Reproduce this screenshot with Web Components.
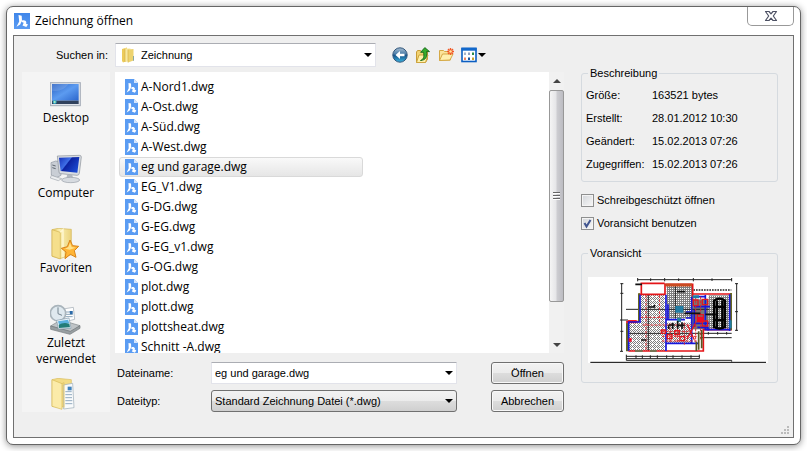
<!DOCTYPE html>
<html lang="de">
<head>
<meta charset="utf-8">
<title>Zeichnung öffnen</title>
<style>
    body {
        margin: 0;
        padding: 6px;
        background: #fff;
        color: #000;
        font-family: "Liberation Sans", Arial, sans-serif;
        font-size: 11px;
    }
</style>
</head>
<body>
<open-dialog></open-dialog>

<script>
const icons = {
    logo: `<svg viewBox="0 0 16 16" width="16" height="16"><defs><linearGradient id="g" x2="0" y2="1"><stop stop-color="#3f86ea"/><stop offset="1" stop-color="#5b9bf2"/></linearGradient></defs><rect width="16" height="16" fill="url(#g)"/><path d="M4.500 2l3.200.8.300 4.700-1.800 4-3.700 2.300 2.700-5.300zM8 7.600c2.200-.8 4 .1 4.400 1.700l-.5 1.200 2.100 1-1.700 2.500-3.800-1.500 1.200-2.700-2-.8z" fill="#fff"/></svg>`,
    dwg: `<svg viewBox="0 0 13 16" width="13" height="16"><path d="M0 0h9l4 4v12H0z" fill="#5a9cf3"/><path d="M9 0v4h4z" fill="#d5e6fc"/><path d="M3.500 4l2.500.6.200 3.400-1.500 3.500-3 2 2-4.200zM6.500 8.200c1.700-.7 3.200.1 3.500 1.400l-.4 1 1.700.9-1.400 2.200-3-1.200.9-2.200-1.600-.6z" fill="#fff"/></svg>`,
    folder: `<svg viewBox="0 0 14 16" width="14" height="16"><path d="M1 2l5-1.500V14l-4 1.500L1 14z" fill="#eccb5c"/><path d="M4 1.500h5.500V14L4 15z" fill="#f8e9a0"/><path d="M7 2.500L12.500 2v11.500L7 15.500z" fill="#edd36f"/><path d="M12 9h1v4.500l-1 .5z" fill="#8aa8a0"/><path d="M4 2v13M7 2.500v13" stroke="#d3ad41" stroke-width=".6"/></svg>`,
    back: `<svg viewBox="0 0 16 16" width="16" height="16"><defs><linearGradient id="b" x2="0" y2="1"><stop stop-color="#a9bfd2"/><stop offset=".45" stop-color="#4478a5"/><stop offset=".5" stop-color="#154f86"/><stop offset="1" stop-color="#39b5e2"/></linearGradient></defs><circle cx="8" cy="8" r="7.200" fill="url(#b)" stroke="#31567b"/><path d="M3.500 8L8 4v2.700h4.500v2.600H8V12z" fill="#fff"/></svg>`,
    up: `<svg viewBox="0 0 16 16" width="16" height="16"><path d="M1.500 5l1-1.500h3L6.500 4.500h6V12l-2 3.500h-9z" fill="#f2d272" stroke="#c79b35"/><path d="M1.500 15.500L4 8h9l-2.500 7.500z" fill="#fff0a8" stroke="#cda440"/><path d="M5.500 13.500C9 12 9.300 9.500 8.500 5.300H5.600L9.800.6l4.700 4H11.500c1 5-.5 8.500-6 8.900z" fill="#35ad2b" stroke="#15651a" stroke-width=".9"/></svg>`,
    create: `<svg viewBox="0 0 16 16" width="16" height="16"><path d="M1.500 13.500V3.500h4l1 1h6V13z" fill="#fbe49a" stroke="#d5a946"/><path d="M1.500 13.500L4.500 7h10.500l-3 6z" fill="#fff0ae" stroke="#d5a946"/><g stroke="#f25a27" stroke-width="1.400"><path d="M12.500 1v7M9 4.500h7M10 2l5 5M15 2l-5 5"/></g><circle cx="12.500" cy="4.500" r="1.300" fill="#ffe7a1"/></svg>`,
    view: `<svg viewBox="0 0 16 16" width="16" height="16"><rect x="1" y="1.500" width="14" height="13" fill="#fff" stroke="#0b5ec2" stroke-width="1.600"/><path d="M.5.700h15v3H.5z" fill="#1268cb"/><path d="M3 5.500h2v2.500H3z" fill="#a6b4ca"/><path d="M7 5.500h2v2.500H7z" fill="#8da0c2"/><path d="M11 5.500h2v2.500h-2z" fill="#2a8a4b"/><path d="M3 10.500h2V13H3z" fill="#ec8466"/><path d="M7 10.500h2V13H7z" fill="#18549d"/><path d="M11 10.500h2V13h-2z" fill="#c8a12c"/></svg>`,
    close: `<svg viewBox="0 0 14 12" width="14" height="12"><path d="M1.500 1.500H5l2 2.300 2-2.300h3.500L9.300 6l3.200 4.500H9L7 8.200l-2 2.300H1.500L4.700 6z" fill="#fff" stroke="#4c5063" stroke-width="1.200" stroke-linejoin="round"/></svg>`,

    desktop: `<svg viewBox="148 234 96 96" width="32" height="32"><defs><linearGradient id="d" x2="1" y2="1"><stop stop-color="#2b62c4"/><stop offset=".5" stop-color="#5c9bf0"/><stop offset="1" stop-color="#2a65cc"/></linearGradient></defs><rect x="149" y="248" width="90" height="69" fill="#dfe3ea" stroke="#a6adb8" stroke-width="3"/><rect x="154" y="252" width="80" height="50" fill="url(#d)"/><path d="M154 302V272q30 6 50-20h-50z" fill="#fff" opacity=".13"/><rect x="154" y="302" width="80" height="10" fill="#30415c"/><circle cx="162" cy="306" r="6" fill="#33b0c9"/><path d="M159 306h6M162 303v6" stroke="#e8f7b0" stroke-width="2"/></svg>`,
    computer: `<svg viewBox="148 9 96 96" width="32" height="32"><defs><linearGradient id="c" x2="1" y2=".6"><stop stop-color="#1430b8"/><stop offset=".45" stop-color="#3f6fe6"/><stop offset=".5" stop-color="#0c22a0"/><stop offset="1" stop-color="#1a48cf"/></linearGradient></defs><path d="M151 38l14-5 16 3v40l-13 7-16-8z" fill="#c9ced5" stroke="#8d949e" stroke-width="2"/><path d="M155 45l10 3M155 53l10 3" stroke="#5e6670" stroke-width="3"/><path d="M170 18l66-2q6 0 6 5l-6 49q-1 6-7 6l-49-5q-5 0-5-5z" fill="#d8dce1" stroke="#8a9099" stroke-width="2"/><path d="M175 23l61-2-6 47-50-5z" fill="url(#c)"/><path d="M199 75h16l3 12h-21z" fill="#b2b8c0"/><ellipse cx="210" cy="90" rx="27" ry="8" fill="#d7dbe0" stroke="#989ea7" stroke-width="2"/><path d="M152 76l31 10-10 6-24-8z" fill="#eceef0" stroke="#a0a6ae" stroke-width="2"/></svg>`,
    favorites: `<svg viewBox="148 234 96 96" width="32" height="32"><defs><linearGradient id="f" x2="1" y2="0"><stop stop-color="#e6c75d"/><stop offset=".4" stop-color="#fbf0b5"/><stop offset="1" stop-color="#ead27b"/></linearGradient></defs><path d="M154 239l18-4 40 3v76l-34 12-24-7z" fill="url(#f)" stroke="#d3b759" stroke-width="2"/><path d="M154 239l25 8v80l-25-9z" fill="#f5df8c" stroke="#d3b452" stroke-width="2"/><path d="M179 247l8-8v83" fill="none" stroke="#fff8d5" stroke-width="4"/><path d="M208 270l8 17 18 2-13 13 5 20-17-9-16 13 3-20-14-11 18-5z" fill="#ffb536" stroke="#d88319" stroke-width="3" stroke-linejoin="round"/><path d="M208 278l5 13 12 2-18 6-14-3 10-5z" fill="#ffe28a"/></svg>`,
    recent: `<svg viewBox="148 9 96 96" width="32" height="32"><path d="M187 27l31-5 4 36-28 7z" fill="#fff" stroke="#9ca6af" stroke-width="2"/><path d="M192 36h23M193 43h23M194 50h22" stroke="#8aa5ba" stroke-width="3"/><path d="M207 33h9v10h-8z" fill="#2c6aa8"/><circle cx="172" cy="40" r="23" fill="#dfe9ef" stroke="#a9b4bb" stroke-width="5"/><path d="M172 22v19l12 5" fill="none" stroke="#73838e" stroke-width="3"/><path d="M150 78l30-18 58 17-27 19z" fill="#bfc4c7" stroke="#7c8387" stroke-width="2"/><path d="M150 78v10l58 15 30-18v-8l-29 17z" fill="#989fa2" stroke="#6f7679" stroke-width="2"/><path d="M168 61l37-7 6 31-38 2z" fill="#eef7fc" stroke="#8199a9" stroke-width="2"/><path d="M172 64l30-5 4 11-31 4z" fill="#5cb1df"/><path d="M174 74q14-8 32-3l2 11-33 2z" fill="#247d78"/></svg>`,
    documents: `<svg viewBox="148 234 96 96" width="32" height="32"><path d="M154 239l18-4 40 4v70l-32 14-26-4z" fill="#f3dc86" stroke="#d9bd5d" stroke-width="2"/><path d="M188 255l28-5 4 73-31 4z" fill="#f9fbfc" stroke="#98a9b5" stroke-width="2"/><path d="M194 275h19M194 284h20M194 293h20M194 302h21M194 311h21" stroke="#93abc0" stroke-width="3"/><path d="M201 260h12v11h-12z" fill="#3f82bd"/><path d="M154 239l30 12v77l-30-9z" fill="#fbeba9" stroke="#d7b954" stroke-width="2"/><path d="M184 251l6-3v75" fill="none" stroke="#e2c76b" stroke-width="3"/></svg>`
};

// Floor plan shown in the preview box
const floorPlan = `
<svg viewBox="24 21 540 258" role="img" aria-label="Grundriss">
    <defs>
        <pattern id="tiles" width="12" height="12" patternUnits="userSpaceOnUse"><rect width="12" height="12" fill="#fff"/><path d="M0 0h3v3H0zM3 3h3v3H3zM6 6h3v3H6zM9 9h3v3H9zM9 3h3v3H9zM3 9h3v3H3zM6 0h3v3H6z" fill="#808080"/></pattern>
        <pattern id="dots" width="6" height="6" patternUnits="userSpaceOnUse"><rect width="6" height="6" fill="#808080"/><path d="M0 0h3v3H0z" fill="#fff"/></pattern>
    </defs>
    <rect x="24" y="21" width="540" height="258" fill="#fff"/>
    <path d="M179 74h79v169H144v-86h35z" fill="url(#tiles)"/>
    <path d="M260 48h76v98h-76z" fill="url(#dots)"/>
    <path d="M336 88h50v90h-50z" fill="#777"/>
    <path d="M386 76h64v102h-64z" fill="url(#dots)"/>
    <path d="M258 158h76v64h-76z" fill="url(#tiles)"/>
    <g fill="none" stroke="#222" stroke-width="3">
        <path d="M173 29h283M173 24v10M212 25v8M254 24v10M296 25v8M340 24v10M396 25v8M455 24v10"/>
        <path d="M125 40v204M121 41h9M121 70h9M120 150h24M121 184h9M120 244h9M470 40v142M465 41h9M465 125h9M465 181h9"/>
        <path d="M139 259h220M139 254v17M168 256v10M187 256v10M211 256v10M232 256v10M260 256v10M279 256v10M306 256v10M333 256v10M358 254v12M139 266h219M139 271h316v4"/>
        <path d="M360 190h95M385 186v8M413 186v8M440 186v8M360 203h95"/>
        <path d="M205 73v170M138 118h250M139 190h220M286 46v100"/>
    </g>
    <path d="M340 60h114" stroke="#222" stroke-width="4" stroke-dasharray="5 3"/>
    <g fill="none" stroke="#e41418" stroke-width="5">
        <path d="M184 71V40h70M177 73h80M141 243v-88h35M145 243h225v-64h85M255 76V43h83v49M340 72h110"/>
    </g>
    <path d="M256 45h80" stroke="#c94b20" stroke-width="9"/>
    <path d="M144 155h26" stroke="#f00" stroke-width="9"/>
    <path d="M177 70v86M141 160v84M453 69v112" stroke="#68681f" stroke-width="6"/>
    <g fill="none" stroke="#1717dc" stroke-width="5">
        <path d="M180 74v82h-34v86M258 74v169M260 149h55M335 80v140M264 103v48M376 75v104h74M346 80h28M342 110h48M340 160h48M449 73v110M258 220h96M318 126h16v18h-16M343 120v50M352 172h32v10"/>
    </g>
    <g fill="none" stroke="#d9282d" stroke-width="3" stroke-dasharray="8 4">
        <path d="M198 75v168M239 76v85M182 142h76M188 165h147M246 184h90M246 199h104M246 213h107M270 160v58M292 160v60M313 158v66M347 80v135M362 80v128"/>
    </g>
    <g fill="none" stroke="#e01820" stroke-width="4">
        <path d="M340 90h14v17h-14zM367 88h16v16h-16zM352 134h18v21h-18zM367 153h16v15h-16zM322 164l21 45M321 207l25-47M244 180h12v10h-12zM262 194h14v12h-14zM284 182h14v12h-14zM300 200h14v12h-14z"/>
    </g>
    <path d="M352 140h18v15h-18zM146 205h9v10h-9z" fill="#f00b27"/>
    <path d="M286 108h24v20h-24zM291 143h12v13h-12zM338 76h19v9h-19zM448 151h7v24h-7z" fill="#217ea5"/>
    <g fill="none" stroke="#111" stroke-width="5">
        <path d="M266 166v11M278 158v19M293 153v23M306 157v20M266 165h18M290 166h24M291 65h24M205 111h18v-6M183 210h16M313 130h48M376 133h38M166 43h20"/>
    </g>
    <g fill="none" stroke="#000" stroke-width="7">
        <path d="M402 92q17-12 33 0v79q-17 9-33 0zM404 111h29M405 150h28M411 92v80M427 92v80"/>
    </g>
    <path d="M356 184v55M349 215v28M365 180v55" stroke="#555723" stroke-width="5"/>
    <path d="M165 243h23M210 243h20" stroke="#777354" stroke-width="6"/>
    <path d="M31 277h527" stroke="#000" stroke-width="3"/>
</svg>`;

// ====================================================================================

class UiIcon extends HTMLElement{
    static get observedAttributes(){
        return ['name'];
    }

    constructor(){
        super();
        this.attachShadow({mode: 'open'});
    }

    attributeChangedCallback(attr, oldName, name){
        this.shadowRoot.innerHTML = `<style>:host {display: block;} svg {display: block;}</style>${icons[name]}`;
    }
}
customElements.define('ui-icon', UiIcon);


const placeTemplate = document.createElement('template');
placeTemplate.innerHTML = `
    <style>
        :host {display: block; min-height: 75px;}
        :host(:last-child) {min-height: 0;}
        button {
            display: flex;
            flex-direction: column;
            align-items: center;
            width: 100%;
            padding: 6px 0 0;
            border: 0;
            background: none;
            color: inherit;
            font: 12px/16px "Open Sans", "Noto Sans", sans-serif;
        }
    </style>
    <button type="button"><ui-icon></ui-icon><span><slot></slot></span></button>
`;
class PlaceItem extends HTMLElement{
    constructor(){
        super();
        this.attachShadow({mode: 'open'}).appendChild( placeTemplate.content.cloneNode(true) );
    }

    connectedCallback(){
        this.shadowRoot.querySelector('ui-icon').setAttribute('name', this.getAttribute('icon'));
        if (this.hasAttribute('label')){
            this.shadowRoot.querySelector('span').remove();
            this.shadowRoot.querySelector('button').setAttribute('aria-label', this.getAttribute('label'));
        }
    }
}
customElements.define('place-item', PlaceItem);


const fileTemplate = document.createElement('template');
fileTemplate.innerHTML = `
    <style>
        :host {
            display: flex;
            align-items: center;
            gap: 3px;
            box-sizing: border-box;
            height: 20px;
            width: 244px;
            padding: 0 5px;
            border: 1px solid transparent;
            font: 12px/18px "Open Sans", "Noto Sans", sans-serif;
            white-space: nowrap;
        }
        :host([selected]) {
            border-color: #d9d9d9;
            border-radius: 3px;
            background: linear-gradient(#f9f9f9, #e6e6e6);
        }
    </style>
    <ui-icon name="dwg"></ui-icon><span><slot></slot></span>
`;
class DwgFile extends HTMLElement{
    constructor(){
        super();
        this.attachShadow({mode: 'open'}).appendChild( fileTemplate.content.cloneNode(true) );
    }

    connectedCallback(){
        this.setAttribute('role', 'option');
    }
}
customElements.define('dwg-file', DwgFile);


const listTemplate = document.createElement('template');
listTemplate.innerHTML = `
    <style>
        :host {
            display: flex;
            height: 281px;
            background: #fff;
        }
        .files {
            flex: 1;
            padding: 5px 4px 0;
            overflow: hidden;
        }
        .bar {
            display: flex;
            flex-direction: column;
            width: 15px;
            background: #f1f1f1;
        }
        .bar svg {display: block; width: 15px; height: 18px;}
        .thumb {
            display: flex;
            flex-direction: column;
            align-items: center;
            justify-content: center;
            gap: 1px;
            height: 210px;
            border: 1px solid #989898;
            border-radius: 2px;
            background: linear-gradient(90deg, #f5f5f5, #e6e6e8 45%, #cdcdd1 55%, #bcbcc2);
        }
        .thumb i {width: 7px; height: 1px; border-bottom: 1px solid #fff; background: #666;}
        .rest {flex: 1;}
    </style>
    <div class="files" role="listbox" aria-label="Dateien"><slot></slot></div>
    <div class="bar">
        <svg viewBox="0 0 15 18"><path d="M4 11l4-4 4 4z" fill="#444"/></svg>
        <div class="thumb"><i></i><i></i><i></i></div>
        <div class="rest"></div>
        <svg viewBox="0 0 15 18"><path d="M4 8l4 4 4-4z" fill="#444"/></svg>
    </div>
`;
class DwgList extends HTMLElement{
    constructor(){
        super();
        this.attachShadow({mode: 'open'}).appendChild( listTemplate.content.cloneNode(true) );
    }
}
customElements.define('dwg-list', DwgList);


// A label with a drop-down, or with a text box when it is editable
class ComboField extends HTMLElement{
    constructor(){
        super();
        this.attachShadow({mode: 'open'});
    }

    connectedCallback(){
        const value = this.getAttribute('value');
        const icon = this.getAttribute('icon');
        const control = this.hasAttribute('editable')
            ? `<input id="field" type="text" value="${value}">`
            : `<select id="field"><option>${value}</option></select>`;
        this.shadowRoot.innerHTML = `
            <style>
                :host {
                    display: grid;
                    grid-template-columns: var(--label-width, 96px) minmax(0, 1fr);
                    align-items: center;
                    --h: 22px;
                }
                :host([icon]) {--h: 24px;}
                label {padding-left: 2px; white-space: nowrap;}
                :host([icon]) label {padding: 0 7px 0 0; text-align: right;}
                .box {display: grid; align-items: center;}
                .box > * {grid-area: 1 / 1;}
                input, select {
                    appearance: none;
                    box-sizing: border-box;
                    width: 100%;
                    height: var(--h);
                    margin: 0;
                    padding: 0 20px 0 3px;
                    border: 1px solid #e2e3ea;
                    border-top-color: #abadb3;
                    border-radius: 1px;
                    background: #fff;
                    color: inherit;
                    font: inherit;
                }
                :host([raised]) select {
                    border-color: #707070;
                    border-radius: 3px;
                    background: linear-gradient(#f2f2f2, #ebebeb 50%, #dddddd 50%, #cfcfcf);
                }
                :host([icon]) select {padding-left: 25px;}
                ui-icon {justify-self: start; padding-left: 6px; pointer-events: none;}
                .arrow {justify-self: end; margin-right: 4px; pointer-events: none;}
            </style>
            <label for="field">${this.getAttribute('label')}</label>
            <div class="box">
                ${control}
                ${icon ? `<ui-icon name="${icon}"></ui-icon>` : ''}
                <svg class="arrow" width="8" height="4" viewBox="0 0 8 4"><path d="M0 0h8L4 4z"/></svg>
            </div>
        `;
    }
}
customElements.define('combo-field', ComboField);


const toolTemplate = document.createElement('template');
toolTemplate.innerHTML = `
    <style>
        :host {display: block;}
        button {
            display: flex;
            align-items: center;
            gap: 1px;
            padding: 0;
            border: 0;
            background: none;
        }
    </style>
    <button type="button"><ui-icon></ui-icon></button>
`;
class ToolButton extends HTMLElement{
    constructor(){
        super();
        this.attachShadow({mode: 'open'}).appendChild( toolTemplate.content.cloneNode(true) );
    }

    connectedCallback(){
        const button = this.shadowRoot.querySelector('button');
        button.setAttribute('aria-label', this.getAttribute('label'));
        button.firstChild.setAttribute('name', this.getAttribute('icon'));
        if (this.hasAttribute('menu')){
            button.insertAdjacentHTML('beforeend', '<svg width="8" height="4" viewBox="0 0 8 4"><path d="M0 0h8L4 4z"/></svg>');
        }
    }
}
customElements.define('tool-button', ToolButton);


const pushTemplate = document.createElement('template');
pushTemplate.innerHTML = `
    <style>
        :host {display: block;}
        button {
            box-sizing: border-box;
            width: 100%;
            height: 22px;
            padding: 0;
            border: 1px solid #707070;
            border-radius: 3px;
            background: linear-gradient(#f2f2f2, #ebebeb 50%, #dddddd 50%, #cfcfcf);
            box-shadow: inset 0 0 0 1px #f8f8f8;
            color: inherit;
            font: inherit;
        }
    </style>
    <button type="button"><slot></slot></button>
`;
class PushButton extends HTMLElement{
    constructor(){
        super();
        this.attachShadow({mode: 'open'}).appendChild( pushTemplate.content.cloneNode(true) );
    }
}
customElements.define('push-button', PushButton);


const checkTemplate = document.createElement('template');
checkTemplate.innerHTML = `
    <style>
        :host {display: block;}
        label {display: flex; align-items: center; gap: 3px; line-height: 14px; white-space: nowrap;}
        input {
            appearance: none;
            box-sizing: border-box;
            width: 13px;
            height: 13px;
            margin: 0;
            border: 1px solid #8e8f8f;
            background: linear-gradient(135deg, #d2d5d9, #f8f8f8);
            box-shadow: inset 0 0 0 1px #f4f4f4;
        }
        .box {display: grid;}
        .box > * {grid-area: 1 / 1;}
        svg {display: none; pointer-events: none;}
        input:checked + svg {display: block;}
    </style>
    <label>
        <span class="box">
            <input type="checkbox">
            <svg width="13" height="13" viewBox="0 0 13 13"><path d="M3.500 6l2 3.500L9.500 3" fill="none" stroke="#41558f" stroke-width="2"/></svg>
        </span>
        <slot></slot>
    </label>
`;
class CheckBox extends HTMLElement{
    constructor(){
        super();
        this.attachShadow({mode: 'open'}).appendChild( checkTemplate.content.cloneNode(true) );
    }

    connectedCallback(){
        this.shadowRoot.querySelector('input').checked = this.hasAttribute('checked');
    }
}
customElements.define('check-box', CheckBox);


const groupTemplate = document.createElement('template');
groupTemplate.innerHTML = `
    <style>
        :host {display: block;}
        fieldset {
            min-width: 0;
            margin: 0;
            padding: 0 4px 5px;
            border: 1px solid #d5dadf;
            border-radius: 3px;
        }
        legend {margin-left: 2px; padding: 0 2px; line-height: 14px;}
    </style>
    <fieldset><legend></legend><slot></slot></fieldset>
`;
class GroupBox extends HTMLElement{
    constructor(){
        super();
        this.attachShadow({mode: 'open'}).appendChild( groupTemplate.content.cloneNode(true) );
    }

    connectedCallback(){
        this.shadowRoot.querySelector('legend').textContent = this.getAttribute('label');
    }
}
customElements.define('group-box', GroupBox);


// ====================================================================================

const details = [
    ['Größe:', '163521 bytes'],
    ['Erstellt:', '28.01.2012 10:30'],
    ['Geändert:', '15.02.2013 07:26'],
    ['Zugegriffen:', '15.02.2013 07:26']
];
const files = ['A-Nord1', 'A-Ost', 'A-Süd', 'A-West', 'eg und garage', 'EG_V1', 'G-DG', 'G-EG', 'G-EG_v1', 'G-OG', 'plot', 'plott', 'plottsheat', 'Schnitt -A'];

const dialogTemplate = document.createElement('template');
dialogTemplate.innerHTML = `
    <style>
        :host {
            display: block;
            border: 1px solid #666;
            border-radius: 7px;
            background: #fff;
            box-shadow: 0 1px 7px rgba(0, 0, 0, 0.45);
        }
        header {
            display: flex;
            align-items: flex-start;
            justify-content: space-between;
            height: 28px;
            padding: 0 6px 0 7px;
        }
        h1 {
            display: flex;
            align-items: center;
            gap: 5px;
            margin: 0;
            font: 12px/28px "Open Sans", "Noto Sans", sans-serif;
        }
        .close {
            display: flex;
            align-items: center;
            justify-content: center;
            width: 47px;
            height: 19px;
            padding: 0;
            border: 1px solid #999;
            border-top: 0;
            border-radius: 0 0 5px 5px;
            background: #fff;
        }
        main {
            display: grid;
            grid-template-columns: 88px minmax(0, 1fr) 197px;
            grid-template-rows: 24px auto auto;
            margin: 0 6px 6px;
            padding: 7px 15px 0 8px;
            border: 1px solid #707070;
            background: #efefef;
        }
        .look {
            grid-column: 1 / 3;
            display: flex;
            align-items: center;
            gap: 7px;
        }
        .look combo-field {width: 354px; margin-right: 9px; --label-width: 93px;}
        .places {
            grid-area: 2 / 1;
            margin-top: 5px;
            background: #f4f4f4;
            overflow: hidden;
        }
        .browse {
            grid-area: 2 / 2;
            margin: 5px 17px 0 5px;
        }
        .fields {
            display: grid;
            grid-template-columns: minmax(0, 1fr) 73px;
            gap: 6px 34px;
            margin-top: 9px;
        }
        .info {
            grid-area: 1 / 3 / 3 / 4;
            padding-top: 23px;
        }
        table {border-collapse: collapse; margin: 3px 0 1px;}
        th, td {height: 23px; padding: 0; font-weight: normal; text-align: left; white-space: nowrap;}
        th {width: 66px;}
        .checks {display: grid; gap: 9px; margin: 11px 0 16px;}
        .preview {padding: 17px 5px 14px 2px;}
        .preview svg {display: block; width: 100%;}
        .grip {grid-area: 3 / 1 / 4 / 4; justify-self: end; margin: 13px -12px 2px 0;}
    </style>
    <header>
        <h1><ui-icon name="logo"></ui-icon>Zeichnung öffnen</h1>
        <button class="close" type="button" aria-label="Schließen"><ui-icon name="close"></ui-icon></button>
    </header>
    <main>
        <div class="look">
            <combo-field label="Suchen in:" value="Zeichnung" icon="folder"></combo-field>
            <tool-button icon="back" label="Zurück"></tool-button>
            <tool-button icon="up" label="Nach oben"></tool-button>
            <tool-button icon="create" label="Neuer Ordner"></tool-button>
            <tool-button icon="view" label="Ansicht" menu></tool-button>
        </div>
        <nav class="places">
            <place-item icon="desktop">Desktop</place-item>
            <place-item icon="computer">Computer</place-item>
            <place-item icon="favorites">Favoriten</place-item>
            <place-item icon="recent">Zuletzt<br>verwendet</place-item>
            <place-item icon="documents" label="Dokumente"></place-item>
        </nav>
        <div class="browse">
            <dwg-list>${files.map(name => `<dwg-file${name == 'eg und garage' ? ' selected' : ''}>${name}.dwg</dwg-file>`).join('')}</dwg-list>
            <div class="fields">
                <combo-field label="Dateiname:" value="eg und garage.dwg" editable></combo-field>
                <push-button>Öffnen</push-button>
                <combo-field label="Dateityp:" value="Standard Zeichnung Datei (*.dwg)" raised></combo-field>
                <push-button>Abbrechen</push-button>
            </div>
        </div>
        <div class="info">
            <group-box label="Beschreibung">
                <table>${details.map(row => `<tr><th scope="row">${row[0]}</th><td>${row[1]}</td></tr>`).join('')}</table>
            </group-box>
            <div class="checks">
                <check-box>Schreibgeschützt öffnen</check-box>
                <check-box checked>Voransicht benutzen</check-box>
            </div>
            <group-box label="Voransicht">
                <div class="preview">${floorPlan}</div>
            </group-box>
        </div>
        <svg class="grip" width="10" height="10" viewBox="0 0 10 10"><path d="M7 1h2v2H7zM4 4h2v2H4zM7 4h2v2H7zM1 7h2v2H1zM4 7h2v2H4zM7 7h2v2H7z" fill="#bbb"/></svg>
    </main>
`;
class OpenDialog extends HTMLElement{
    constructor(){
        super();
        this.attachShadow({mode: 'open'}).appendChild( dialogTemplate.content.cloneNode(true) );
    }
}
customElements.define('open-dialog', OpenDialog);
</script>
</body>
</html>
